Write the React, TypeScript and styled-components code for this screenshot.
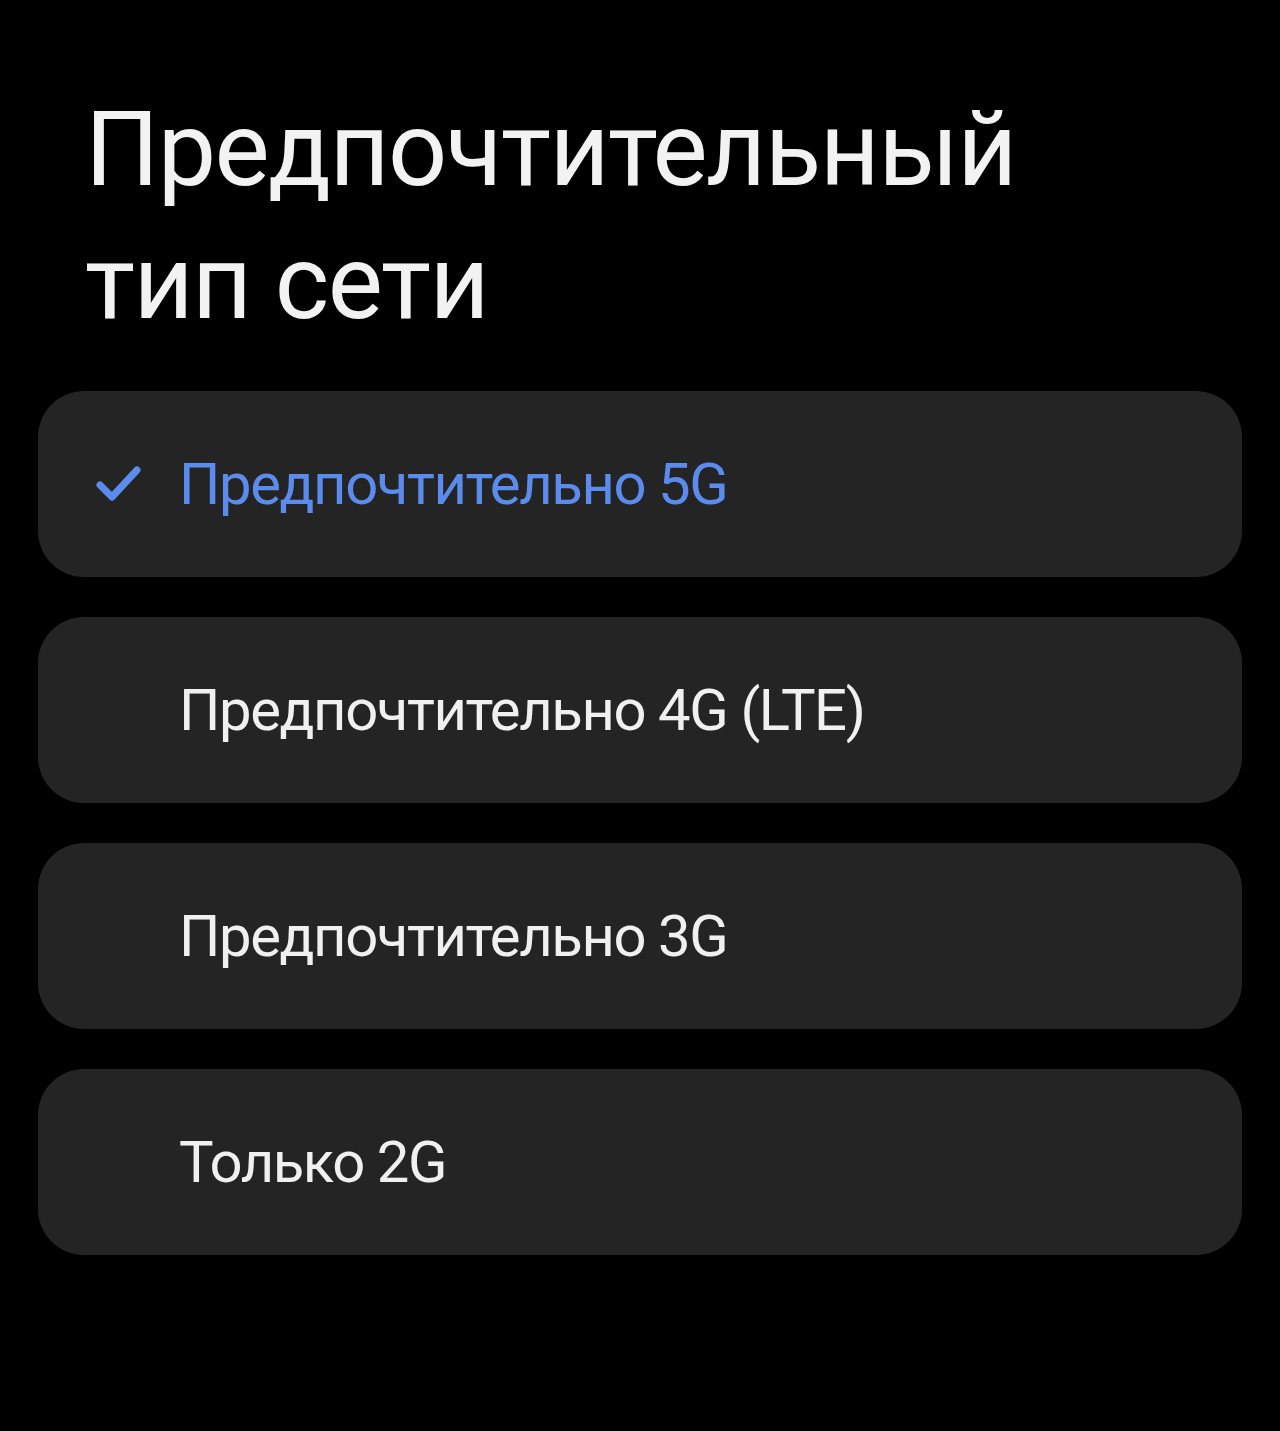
import styled, { createGlobalStyle } from "styled-components";

const GlobalStyle = createGlobalStyle`
  html, body {
    margin: 0;
    padding: 0;
    background: #000;
  }
  body {
    font-family: Roboto, "Noto Sans", sans-serif;
  }
`;

const Screen = styled.div`
  width: 1280px;
  min-height: 1431px;
  background: #000;
  box-sizing: border-box;
  padding: 83px 38px 0 38px;
`;

const Title = styled.h1`
  margin: 0 0 42px 47px;
  color: #f2f2f2;
  font-weight: 400;
  font-size: 104px;
  line-height: 133px;
  letter-spacing: -1.5px;
`;

const OptionList = styled.div`
  display: flex;
  flex-direction: column;
  gap: 40px;
`;

const Option = styled.div`
  display: flex;
  align-items: center;
  height: 186px;
  border-radius: 46px;
  background: #242424;
  padding-left: 57px;
  box-sizing: border-box;
`;

const CheckSlot = styled.div`
  width: 84px;
  display: flex;
  align-items: center;
`;

const Label = styled.span<{ $active?: boolean }>`
  color: ${(p) => (p.$active ? "#5b8ced" : "#f0f0f0")};
  font-size: 58px;
  font-weight: 400;
  letter-spacing: -1.4px;
`;

const options = [
  "Предпочтительно 5G",
  "Предпочтительно 4G (LTE)",
  "Предпочтительно 3G",
  "Только 2G",
];

function Check() {
  return (
    <svg width="48" height="40" viewBox="0 0 48 40">
      <path
        d="M5 21 L17 33 L42 6"
        fill="none"
        stroke="#5b8ced"
        strokeWidth="7"
        strokeLinecap="round"
        strokeLinejoin="round"
      />
    </svg>
  );
}

export default function App() {
  const selected = 0;
  return (
    <>
      <GlobalStyle />
      <Screen>
        <Title>
          Предпочтительный
          <br />
          тип сети
        </Title>
        <OptionList>
          {options.map((item, index) => (
            <Option key={index}>
              <CheckSlot>{index === selected && <Check />}</CheckSlot>
              <Label $active={index === selected}>{item}</Label>
            </Option>
          ))}
        </OptionList>
      </Screen>
    </>
  );
}
